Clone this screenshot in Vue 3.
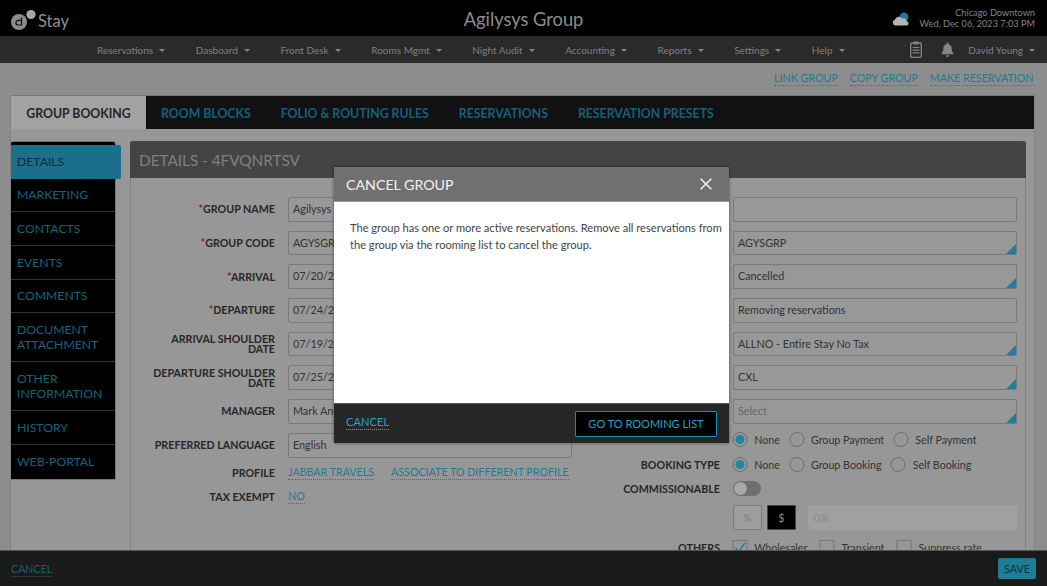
<script setup>
const navItems = ['Reservations', 'Dasboard', 'Front Desk', 'Rooms Mgmt', 'Night Audit', 'Accounting', 'Reports', 'Settings', 'Help']
const tabs = ['ROOM BLOCKS', 'FOLIO & ROUTING RULES', 'RESERVATIONS', 'RESERVATION PRESETS']
const side = ['MARKETING', 'CONTACTS', 'EVENTS', 'COMMENTS', 'DOCUMENT ATTACHMENT', 'OTHER INFORMATION', 'HISTORY', 'WEB-PORTAL']
const leftRows = [
  { label: 'GROUP NAME', req: true, value: 'Agilysys Travel Group' },
  { label: 'GROUP CODE', req: true, value: 'AGYSGRP' },
  { label: 'ARRIVAL', req: true, value: '07/20/2023' },
  { label: 'DEPARTURE', req: true, value: '07/24/2023' },
  { label: 'ARRIVAL SHOULDER DATE', value: '07/19/2023' },
  { label: 'DEPARTURE SHOULDER DATE', value: '07/25/2023' },
  { label: 'MANAGER', value: 'Mark Anderson' },
  { label: 'PREFERRED LANGUAGE', value: 'English' }
]
const rightRows = [
  { value: '' },
  { value: 'AGYSGRP', select: true },
  { value: 'Cancelled', select: true },
  { value: 'Removing reservations' },
  { value: 'ALLNO - Entire Stay No Tax', select: true },
  { value: 'CXL', select: true },
  { value: 'Select', select: true, muted: true }
]
</script>

<template>
  <div class="app">
    <header class="top">
      <div class="logo">
        <svg class="logo-mark" width="28" height="26" viewBox="0 0 28 26">
          <circle cx="9" cy="15" r="8" fill="#8c8c8c" />
          <circle cx="21" cy="7.5" r="4.6" fill="#a8a8a8" />
          <path d="M11.5 10.5V18H8.2a2.3 2.3 0 1 1 0-4.6H11.5" fill="none" stroke="#111" stroke-width="1.2" />
        </svg>
        <span>Stay</span>
      </div>
      <div class="title">Agilysys Group</div>
      <div class="where">
        <svg class="cloud" width="18" height="16" viewBox="0 0 18 16">
          <circle cx="12" cy="6" r="4.4" fill="#1c7c98" />
          <path d="M3.4 14.4a2.9 2.9 0 0 1-.4-5.7 4 4 0 0 1 7.2-1.2 3.2 3.2 0 0 1 4.6 2.8 2.1 2.1 0 0 1 .2 4.1Z" fill="#b4b4b4" />
        </svg>
        <div class="where-text">
          <div>Chicago Downtown</div>
          <div>Wed, Dec 06, 2023 7:03 PM</div>
        </div>
      </div>
    </header>

    <nav class="nav">
      <div class="nav-items">
        <span v-for="n in navItems" :key="n" class="nav-item">{{ n }}<i class="caret"></i></span>
      </div>
      <div class="nav-right">
        <svg width="12" height="17" viewBox="0 0 12 17">
          <rect x="0.7" y="2" width="10.6" height="14.3" rx="1.2" fill="none" stroke="#858585" stroke-width="1.3" />
          <rect x="3.5" y="0.5" width="5" height="3" fill="#858585" />
          <path d="M2.6 6.5h6.8M2.6 9.2h6.8M2.6 11.9h6.8" stroke="#858585" stroke-width="1.2" />
        </svg>
        <svg class="bell" width="13" height="15" viewBox="0 0 13 15">
          <path d="M6.5 0.6a1 1 0 0 1 1 1v.6c2.1.5 3.2 2.2 3.2 4.3 0 2.6.6 3.7 1.8 4.9v.8H.5v-.8c1.2-1.2 1.8-2.3 1.8-4.9 0-2.1 1.1-3.8 3.2-4.3v-.6a1 1 0 0 1 1-1Z" fill="#858585" />
          <path d="M4.8 13.2h3.4a1.7 1.7 0 0 1-3.4 0Z" fill="#858585" />
        </svg>
        <span class="nav-item user">David Young<i class="caret"></i></span>
      </div>
    </nav>

    <div class="actions">
      <a class="link">LINK GROUP</a>
      <a class="link">COPY GROUP</a>
      <a class="link">MAKE RESERVATION</a>
    </div>

    <main class="frame">
      <div class="tabs">
        <div class="tab active">GROUP BOOKING</div>
        <div v-for="t in tabs" :key="t" class="tab">{{ t }}</div>
      </div>
      <div class="tab-body">
        <aside class="sidebar">
          <div class="side-item current">DETAILS</div>
          <div v-for="s in side" :key="s" class="side-item">{{ s }}</div>
        </aside>
        <section class="panel">
          <h2 class="panel-head">DETAILS - 4FVQNRTSV</h2>
          <div class="form">
            <div class="col">
              <div v-for="r in leftRows" :key="r.label" class="row">
                <label class="lbl"><em v-if="r.req">*</em>{{ r.label }}</label>
                <div class="input">{{ r.value }}</div>
              </div>
              <div class="row slim profile">
                <label class="lbl">PROFILE</label>
                <div class="links"><a class="link">JABBAR TRAVELS</a><a class="link">ASSOCIATE TO DIFFERENT PROFILE</a></div>
              </div>
              <div class="row slim tax">
                <label class="lbl">TAX EXEMPT</label>
                <div class="links"><a class="link">NO</a></div>
              </div>
            </div>
            <div class="col">
              <div v-for="(r, i) in rightRows" :key="i" class="row">
                <label class="lbl"></label>
                <div class="input" :class="{ select: r.select, muted: r.muted }">{{ r.value }}</div>
              </div>
              <div class="row slim r-pay">
                <label class="lbl"></label>
                <div class="opts">
                  <span class="opt"><i class="radio on"></i>None</span>
                  <span class="opt"><i class="radio"></i>Group Payment</span>
                  <span class="opt"><i class="radio"></i>Self Payment</span>
                </div>
              </div>
              <div class="row slim r-book">
                <label class="lbl">BOOKING TYPE</label>
                <div class="opts">
                  <span class="opt"><i class="radio on"></i>None</span>
                  <span class="opt"><i class="radio"></i>Group Booking</span>
                  <span class="opt"><i class="radio"></i>Self Booking</span>
                </div>
              </div>
              <div class="row slim">
                <label class="lbl">COMMISSIONABLE</label>
                <div class="toggle"><i></i></div>
              </div>
              <div class="row slim r-amt">
                <label class="lbl"></label>
                <div class="amount">
                  <span class="unit">%</span>
                  <span class="unit dark">$</span>
                  <span class="disabled">0%</span>
                </div>
              </div>
              <div class="row slim r-others">
                <label class="lbl">OTHERS</label>
                <div class="opts checks">
                  <span class="opt"><i class="box">
                    <svg width="15" height="15" viewBox="0 0 15 15"><path d="M3 8l3 3.2L12.6 3" fill="none" stroke="#1f7f9a" stroke-width="1.4" /></svg>
                  </i>Wholesaler</span>
                  <span class="opt"><i class="box"></i>Transient</span>
                  <span class="opt"><i class="box"></i>Suppress rate</span>
                </div>
              </div>
            </div>
          </div>
        </section>
      </div>
    </main>

    <footer class="bottom">
      <a class="link foot-link">CANCEL</a>
      <button class="save">SAVE</button>
    </footer>

    <div class="modal">
      <div class="modal-head">
        <span>CANCEL GROUP</span>
        <svg width="12" height="12" viewBox="0 0 12 12"><path d="M.7.7l10.6 10.6M11.3.7.7 11.3" stroke="#f2f2f2" stroke-width="1.5" /></svg>
      </div>
      <div class="modal-body">The group has one or more active reservations. Remove all reservations from the group via the rooming list to cancel the group.</div>
      <div class="modal-foot">
        <a class="link modal-cancel">CANCEL</a>
        <button class="go">GO TO ROOMING LIST</button>
      </div>
    </div>
  </div>
</template>

<style>
html, body { margin: 0; padding: 0; background: #8b8b8b; }
</style>

<style scoped>
* { box-sizing: border-box; }
.app {
  position: relative;
  width: 1047px;
  height: 586px;
  display: flex;
  flex-direction: column;
  overflow: hidden;
  background: #8d8d8d;
  font-family: Lato, "Noto Sans", sans-serif;
  color: #2b2b2b;
}
.top {
  position: relative;
  height: 36px;
  flex: none;
  background: #000;
  display: flex;
  align-items: center;
  justify-content: space-between;
  padding: 0 12px 0 10px;
}
.logo {
  display: flex;
  align-items: center;
  color: #8f8f8f;
  font-size: 16.5px;
  height: 36px;
}
.logo span { margin-top: 6px; }
.logo-mark { margin-top: 3px; }
.title {
  position: absolute;
  left: 0;
  right: 0;
  top: 7px;
  text-align: center;
  font-size: 18.3px;
  line-height: 24px;
  color: #8c8c8c;
}
.where { display: flex; align-items: center; gap: 10px; color: #858585; font-size: 9.2px; line-height: 11px; }
.where-text { text-align: right; }
.cloud { margin-top: 2px; }
.nav {
  height: 27px;
  flex: none;
  background: #2a2a2a;
  display: flex;
  align-items: center;
  justify-content: space-between;
  padding: 0 12px 0 97px;
  color: #808080;
  font-size: 10px;
}
.nav-items { display: flex; gap: 30.6px; }
.nav-item { display: inline-flex; align-items: center; white-space: nowrap; }
.caret {
  display: inline-block;
  width: 0;
  height: 0;
  margin-left: 6px;
  margin-top: 2px;
  border-left: 3.5px solid transparent;
  border-right: 3.5px solid transparent;
  border-top: 3.5px solid #858585;
}
.nav-right { display: flex; align-items: center; }
.bell { margin-left: 19px; }
.user { margin-left: 14px; }
.actions {
  height: 32px;
  flex: none;
  display: flex;
  justify-content: flex-end;
  align-items: center;
  gap: 12px;
  padding: 0 13.5px 2px 0;
}
.link {
  color: #1e7b95;
  font-size: 10.7px;
  line-height: 14px;
  border-bottom: 1px dotted #1e7b95;
  white-space: nowrap;
}
.frame {
  flex: 1;
  min-height: 0;
  margin: 0 12px 0 10px;
  display: flex;
  flex-direction: column;
  overflow: hidden;
  background: #979797;
  border-left: 1px solid #828282;
  border-right: 1px solid #828282;
}
.tabs {
  height: 34px;
  flex: none;
  display: flex;
  background: #111;
  border-top: 1px solid #777;
}
.tab {
  padding: 1px 15px 0;
  font-size: 12.3px;
  font-weight: 700;
  line-height: 34px;
  color: #15607a;
  white-space: nowrap;
}
.tab.active {
  width: 135px;
  padding: 1px 0 0;
  text-align: center;
  background: #a2a2a2;
  color: #242424;
}
.tab-body {
  flex: 1;
  min-height: 0;
  display: flex;
  align-items: flex-start;
  padding-right: 9px;
}
.sidebar {
  width: 104px;
  margin-top: 13px;
  padding-top: 3px;
  flex: none;
  background: #000;
  border-radius: 2px 2px 0 0;
  box-shadow: 0 0 0 0.5px #555;
}
.side-item {
  padding: 0 6px;
  min-height: 33.7px;
  font-size: 12.2px;
  line-height: 15.5px;
  display: flex;
  align-items: center;
  color: #14637c;
  border-bottom: 1px solid #333;
}
.side-item:nth-child(6), .side-item:nth-child(7) { min-height: 49px; }
.side-item.current {
  width: 110px;
  background: #1b6f8c;
  color: #0b2c3a;
  border-bottom: 0;
  border-radius: 0 2px 2px 0;
  position: relative;
}
.side-item:last-child { border-bottom: 0; }
.panel {
  margin: 12px 0 0 15px;
  width: 896px;
  flex: none;
  height: 420px;
  border-left: 1px solid #828282;
  border-right: 1px solid #828282;
}
.panel-head {
  margin: 0 -1px;
  height: 37px;
  padding: 0 9px;
  background: #444;
  border-radius: 3px 3px 0 0;
  color: #808080;
  font-size: 15.3px;
  font-weight: 400;
  line-height: 38px;
}
.form { display: flex; gap: 13px; padding: 19px 8px 0 4px; }
.col { width: 437px; }
.col:last-child { width: 432px; }
.row { display: flex; align-items: center; gap: 13px; min-height: 24.7px; margin-top: 9px; }
.row:first-child { margin-top: 0; }
.slim { height: 24px; min-height: 24px; margin-top: 0; }
.profile { margin-top: 3px; }
.r-pay { margin-top: 4px; }
.r-book { margin-top: 1px; }
.r-amt { margin-top: 5px; }
.r-others { margin-top: 6px; }
.lbl {
  flex: 1;
  min-width: 0;
  padding-left: 16px;
  text-align: right;
  font-size: 10.7px;
  font-weight: 700;
  line-height: 10px;
  color: #262626;
}
.lbl em { color: #8c2020; font-style: normal; }
.input {
  width: 284px;
  height: 24.7px;
  flex: none;
  padding: 0 4px;
  border: 1px solid #797979;
  border-radius: 2px;
  font-size: 10.8px;
  line-height: 22.4px;
  color: #333;
  background: #989898;
  white-space: nowrap;
  overflow: hidden;
  position: relative;
}
.input.muted { color: #666; }
.input.select::after {
  content: "";
  position: absolute;
  right: 0;
  bottom: 0;
  border-left: 10px solid transparent;
  border-bottom: 10px solid #1e7f9b;
}
.links { width: 284px; flex: none; display: flex; gap: 17px; }
.opts { width: 284px; flex: none; display: flex; gap: 9.4px; font-size: 10.7px; color: #333; transform: translateX(-0.5px); }
.checks { gap: 12.5px; }
.opt { display: inline-flex; align-items: center; gap: 6.7px; white-space: nowrap; }
.radio {
  width: 15px;
  height: 15px;
  border-radius: 50%;
  border: 1px solid #6e6e6e;
  flex: none;
  position: relative;
  display: block;
}
.radio.on::after {
  content: "";
  position: absolute;
  inset: 2px;
  border-radius: 50%;
  background: #1e86a3;
}
.box {
  width: 15px;
  height: 15px;
  border: 1px solid #777;
  display: block;
  flex: none;
  position: relative;
}
.box svg { position: absolute; left: -1px; top: -1px; }
.toggle {
  width: 284px;
  flex: none;
}
.toggle i {
  display: block;
  width: 28px;
  height: 15px;
  border-radius: 8px;
  background: #6f6f6f;
  position: relative;
}
.toggle i::after {
  content: "";
  position: absolute;
  left: 1px;
  top: 1px;
  width: 13px;
  height: 13px;
  border-radius: 50%;
  background: #a8a8a8;
}
.amount { width: 284px; flex: none; display: flex; height: 25px; font-size: 10.8px; }
.unit {
  width: 29px;
  height: 25px;
  border: 1px solid #7c7c7c;
  background: #9e9e9e;
  color: #7c7c7c;
  text-align: center;
  line-height: 23px;
  margin-right: 5px;
  border-radius: 1px;
}
.unit.dark { background: #000; color: #8a8a8a; margin-right: 12px; border-color: #444; }
.disabled {
  flex: 1;
  background: #a0a0a0;
  color: #888;
  padding-left: 6px;
  line-height: 25px;
  border-radius: 2px;
}
.bottom {
  height: 36px;
  flex: none;
  background: #1a1a1a;
  border-top: 1px solid #555;
  position: relative;
  display: flex;
  justify-content: space-between;
  align-items: center;
  padding: 0 11px;
}
.foot-link { color: #165f76; border-color: #165f76; margin-top: 2px; }
.save {
  width: 38px;
  height: 21px;
  padding: 0;
  background: #1f7c96;
  color: #0e3340;
  border: 0;
  border-radius: 2px;
  font: 400 10.8px Lato, sans-serif;
}
.modal {
  position: absolute;
  left: 334px;
  top: 167px;
  width: 395px;
  height: 276px;
  display: flex;
  flex-direction: column;
  background: #fff;
  box-shadow: 0 0 3px rgba(0, 0, 0, 0.5);
}
.modal-head {
  height: 35px;
  flex: none;
  background: #707070;
  color: #f2f2f2;
  font-size: 14.2px;
  padding: 0 17px 0 12px;
  display: flex;
  align-items: center;
  justify-content: space-between;
  border-bottom: 1px solid #9a9a9a;
}
.modal-body {
  flex: 1;
  padding: 16.5px 2px 0 16px;
  font-size: 11.1px;
  line-height: 17.5px;
  color: #444;
  background: #fff;
}
.modal-foot {
  height: 40px;
  flex: none;
  background: #272727;
  border-top: 1px solid #555;
  display: flex;
  align-items: center;
  justify-content: space-between;
  padding: 0 12px;
}
.modal-cancel { color: #1fa3c6; border-color: #1fa3c6; margin-top: -2px; font-size: 11.2px; }
.go {
  width: 142px;
  height: 26px;
  padding: 0;
  background: #000;
  color: #1fa3c6;
  border: 1px solid #1d8fae;
  border-radius: 1px;
  font: 400 11px Lato, sans-serif;
}
</style>
